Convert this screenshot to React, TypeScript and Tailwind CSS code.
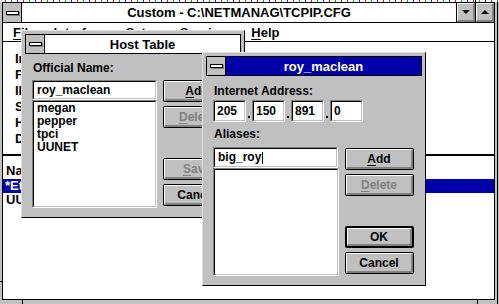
import React from 'react';

// Windows 3.1 style: TCP/IP config with two dialogs on top

function SysBox() {
  return (
    <div className="flex w-[19px] shrink-0 items-center justify-center border-r border-black bg-[#c0c0c0]">
      <div className="h-[4px] w-[13px] border border-black bg-white shadow-[1px_1px_0_#808080]" />
    </div>
  );
}

function Btn({ text, ul, disabled, isDefault }: { text: string; ul?: boolean; disabled?: boolean; isDefault?: boolean }) {
  return (
    <div className={`h-[22px] w-[69px] shrink-0 rounded-[2px] bg-black ${isDefault ? 'p-[2px]' : 'p-[1px]'}`}>
      <div
        className={`flex h-full w-full items-center justify-center border-t border-l border-r-2 border-b-2 border-t-white border-l-white border-r-[#808080] border-b-[#808080] bg-[#c0c0c0] text-[12px] font-bold leading-none ${
          disabled ? 'text-[#808080]' : 'text-black'
        }`}
      >
        {ul ? (
          <span>
            <span className="underline underline-offset-2">{text[0]}</span>
            {text.slice(1)}
          </span>
        ) : (
          text
        )}
      </div>
    </div>
  );
}

function Sunken({ className, children }: { className?: string; children?: React.ReactNode }) {
  return (
    <div className={`border border-t-[#808080] border-l-[#808080] border-b-white border-r-white ${className ?? ''}`}>
      <div className="h-full w-full border border-t-black border-l-black border-b-[#c0c0c0] border-r-[#c0c0c0] bg-white">
        {children}
      </div>
    </div>
  );
}

function Dialog({ title, active, className, children }: { title: string; active?: boolean; className: string; children: React.ReactNode }) {
  return (
    <div className={`absolute flex flex-col border border-t-[#dfdfdf] border-l-[#dfdfdf] border-b-black border-r-black bg-[#c0c0c0] p-[3px] ${className}`}>
      <div className="flex h-[20px] shrink-0 border border-black">
        <SysBox />
        <div
          className={`flex flex-1 items-center justify-center text-[13px] font-bold leading-none ${
            active ? 'bg-[#0000a8] text-white' : 'bg-white text-black'
          }`}
        >
          {title}
        </div>
      </div>
      {children}
    </div>
  );
}

export default function App() {
  const labels = ['Interface:', 'Frame Type:', 'IP Address:', 'Subnet Mask:', 'Host Name:', 'Domain:'];
  const hosts = ['megan', 'pepper', 'tpci', 'UUNET'];
  const ip = ['205', '150', '891', '0'];

  return (
    <div className="relative h-[304px] w-[499px] overflow-hidden bg-[#c0c0c0] font-['Liberation_Sans',Arial,sans-serif] text-black">
      <div className="h-[2px] bg-[repeating-linear-gradient(90deg,#ffffff_0_5px,#c02020_5px_6px,#ffffff_6px_11px,#20a020_11px_12px,#ffffff_12px_17px,#2020c0_17px_18px)]" />

      <div className="flex">
        <div className="w-[2px]" />
        {/* main window */}
        <div className="flex h-[298px] w-[493px] flex-col border border-black bg-white">
          <div className="flex h-[20px] shrink-0 border-b border-black">
            <SysBox />
            <div className="flex flex-1 items-center justify-center text-[13px] font-bold leading-none">
              Custom - C:\NETMANAG\TCPIP.CFG
            </div>
            <div className="flex w-[19px] border-l border-black">
              <div className="flex flex-1 items-center justify-center border-t border-l border-r-2 border-b-2 border-t-white border-l-white border-r-[#808080] border-b-[#808080] bg-[#c0c0c0]">
                <div className="h-0 w-0 border-x-[4px] border-t-[4px] border-x-transparent border-t-black" />
              </div>
            </div>
            <div className="flex w-[19px] border-l border-black">
              <div className="flex flex-1 items-center justify-center border-t border-l border-r-2 border-b-2 border-t-white border-l-white border-r-[#808080] border-b-[#808080] bg-[#c0c0c0]">
                <div className="h-0 w-0 border-x-[4px] border-b-[4px] border-x-transparent border-b-black" />
              </div>
            </div>
          </div>

          <div className="flex h-[19px] shrink-0 items-center gap-[18px] border-b border-black pl-[10px] text-[13px] font-bold leading-none">
            <span><span className="underline underline-offset-2">F</span>ile</span>
            <span><span className="underline underline-offset-2">I</span>nterface</span>
            <span><span className="underline underline-offset-2">S</span>etup</span>
            <span>Se<span className="underline underline-offset-2">r</span>vices</span>
            <span><span className="underline underline-offset-2">H</span>elp</span>
          </div>

          <div className="flex flex-1 flex-col">
            <div className="flex h-[104px] flex-col pl-[12px] pt-[9px] text-[13px] font-bold leading-[16px]">
              {labels.map((l) => (
                <div key={l}>{l}</div>
              ))}
            </div>
            <div className="mt-[8px] h-[2px] bg-black" />
            <div className="h-[23px] pl-[3px] pt-[7px] text-[13px] font-bold leading-[16px]">Name</div>
            <div className="h-[14px] bg-[#0000a8] pl-[2px] text-[13px] font-bold leading-[14px] text-white">*Ethernet</div>
            <div className="h-[14px] pl-[3px] text-[13px] font-bold leading-[14px]">UUNET</div>
          </div>
        </div>
        <div className="w-[2px]" />
        <div className="h-[304px] w-px bg-black" />
      </div>

      {/* frame notches */}
      <div className="absolute left-0 top-[281px] h-px w-[2px] bg-black" />
      <div className="absolute left-[22px] top-[300px] h-[4px] w-px bg-black" />
      <div className="absolute left-[477px] top-[300px] h-[4px] w-px bg-black" />
      <div className="absolute left-[475px] top-0 h-[2px] w-px bg-black" />

      <Dialog title="Host Table" className="left-[21px] top-[30px] h-[188px] w-[224px]">
        <div className="pl-[8px] pt-[6px] text-[12px] font-bold leading-[16px]">Official Name:</div>
        <div className="mt-[4px] flex gap-[6px] pl-[7px]">
          <div className="flex flex-col">
            <Sunken className="h-[20px] w-[125px]">
              <div className="pl-[3px] text-[12px] font-bold leading-[16px]">roy_maclean</div>
            </Sunken>
            <Sunken className="h-[108px] w-[125px]">
              <div className="flex flex-col pl-[3px] text-[12px] font-bold leading-[13px]">
                {hosts.map((h) => (
                  <div key={h}>{h}</div>
                ))}
              </div>
            </Sunken>
          </div>
          <div className="flex flex-col gap-[4px]">
            <Btn text="Add" ul />
            <Btn text="Delete" ul disabled />
            <div className="h-[22px]" />
            <Btn text="Save" ul disabled />
            <Btn text="Cancel" />
          </div>
        </div>
      </Dialog>

      <Dialog title="roy_maclean" active className="left-[202px] top-[52px] h-[234px] w-[224px]">
        <div className="pl-[8px] pt-[7px] text-[12px] font-bold leading-[16px]">Internet Address:</div>
        <div className="mt-[1px] flex items-end pl-[7px]">
          {ip.map((n, i) => (
            <React.Fragment key={i}>
              {i > 0 && (
                <div className="flex h-[22px] w-[6px] items-end justify-center pb-[4px]">
                  <div className="h-[2px] w-[2px] bg-black" />
                </div>
              )}
              <Sunken className="h-[22px] w-[33px]">
                <div className="pl-[2px] text-[12px] font-bold leading-[18px]">{n}</div>
              </Sunken>
            </React.Fragment>
          ))}
        </div>
        <div className="mt-[4px] pl-[8px] text-[12px] font-bold leading-[16px]">Aliases:</div>
        <div className="mt-[5px] flex gap-[6px] pl-[7px]">
          <div className="flex flex-col">
            <Sunken className="h-[21px] w-[125px]">
              <div className="flex items-center pl-[3px] text-[12px] font-bold leading-[17px]">
                big_roy
                <span className="ml-px inline-block h-[12px] w-px bg-black" />
              </div>
            </Sunken>
            <Sunken className="h-[108px] w-[126px]" />
          </div>
          <div className="mt-[1px] flex flex-col gap-[4px]">
            <Btn text="Add" ul />
            <Btn text="Delete" ul disabled />
            <div className="h-[22px]" />
            <Btn text="OK" isDefault />
            <Btn text="Cancel" />
          </div>
        </div>
      </Dialog>
    </div>
  );
}
